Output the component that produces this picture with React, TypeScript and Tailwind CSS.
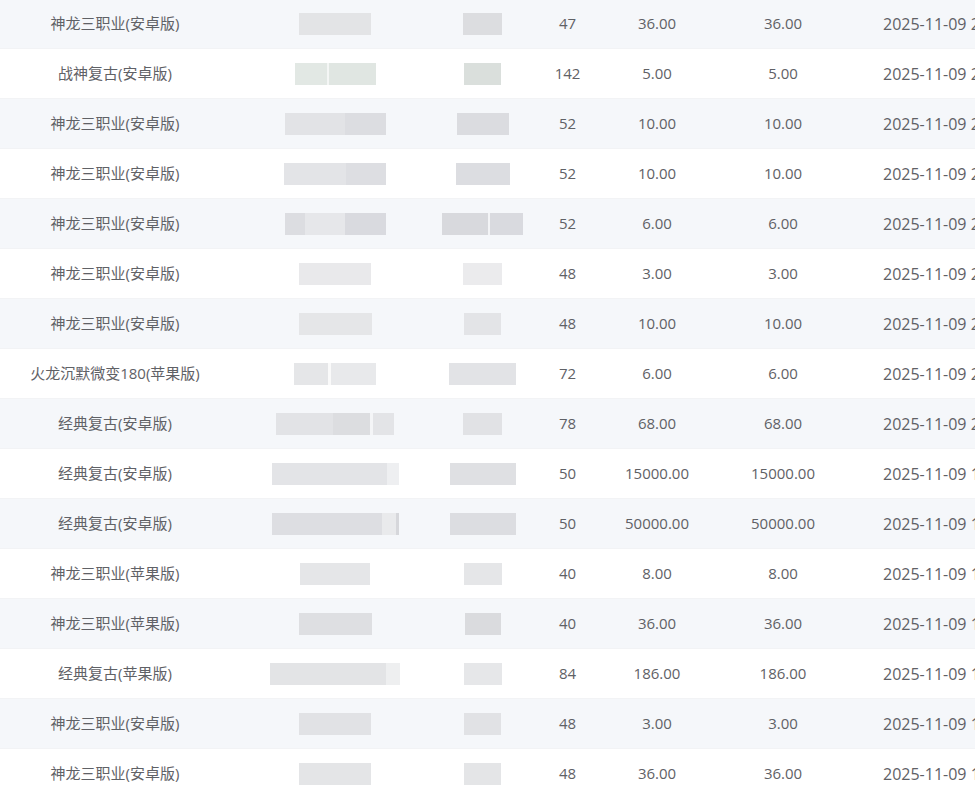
import React from 'react';

type Seg = [number, string];

interface Row {
  name: string;
  a: Seg[];
  b: Seg[];
  level: number;
  price: string;
  time: string;
}

const rows: Row[] = [
  { name: '神龙三职业(安卓版)', a: [[72, '#e3e4e6']], b: [[39, '#dcdde0']], level: 47, price: '36.00', time: '2025-11-09 21:48:12' },
  { name: '战神复古(安卓版)', a: [[32, '#e2e8e4'], [2, '#f4f6f5'], [47, '#e0e6e2']], b: [[37, '#dadfdc']], level: 142, price: '5.00', time: '2025-11-09 21:40:37' },
  { name: '神龙三职业(安卓版)', a: [[60, '#e2e3e6'], [41, '#dcdde1']], b: [[52, '#dbdce0']], level: 52, price: '10.00', time: '2025-11-09 21:33:05' },
  { name: '神龙三职业(安卓版)', a: [[62, '#e3e4e7'], [40, '#dddee2']], b: [[54, '#dcdde1']], level: 52, price: '10.00', time: '2025-11-09 21:32:48' },
  { name: '神龙三职业(安卓版)', a: [[20, '#dcdde1'], [40, '#e6e7ea'], [41, '#d9dadf']], b: [[46, '#d8d9dd'], [2, '#f3f4f6'], [33, '#d9dadf']], level: 52, price: '6.00', time: '2025-11-09 21:29:51' },
  { name: '神龙三职业(安卓版)', a: [[72, '#e9e9eb']], b: [[39, '#ebebed']], level: 48, price: '3.00', time: '2025-11-09 21:17:26' },
  { name: '神龙三职业(安卓版)', a: [[73, '#e5e6e8']], b: [[37, '#e3e4e7']], level: 48, price: '10.00', time: '2025-11-09 21:12:09' },
  { name: '火龙沉默微变180(苹果版)', a: [[34, '#e5e6e8'], [3, '#fafafa'], [45, '#e8e9eb']], b: [[67, '#e2e3e6']], level: 72, price: '6.00', time: '2025-11-09 20:58:44' },
  { name: '经典复古(安卓版)', a: [[57, '#e2e3e6'], [37, '#dcdde0'], [3, '#f4f5f7'], [21, '#e3e4e7']], b: [[39, '#e1e2e5']], level: 78, price: '68.00', time: '2025-11-09 20:41:15' },
  { name: '经典复古(安卓版)', a: [[115, '#e3e4e7'], [12, '#eeeff1']], b: [[66, '#dfe0e3']], level: 50, price: '15000.00', time: '2025-11-09 19:56:30' },
  { name: '经典复古(安卓版)', a: [[110, '#dddee2'], [14, '#e9eaec'], [3, '#d6d7db']], b: [[66, '#dcdde1']], level: 50, price: '50000.00', time: '2025-11-09 19:55:02' },
  { name: '神龙三职业(苹果版)', a: [[70, '#e5e6e8']], b: [[38, '#e5e6e8']], level: 40, price: '8.00', time: '2025-11-09 19:43:19' },
  { name: '神龙三职业(苹果版)', a: [[73, '#dedfe2']], b: [[36, '#dadbde']], level: 40, price: '36.00', time: '2025-11-09 19:37:58' },
  { name: '经典复古(苹果版)', a: [[116, '#e3e4e6'], [14, '#eeeff0']], b: [[38, '#e6e7e9']], level: 84, price: '186.00', time: '2025-11-09 19:21:40' },
  { name: '神龙三职业(安卓版)', a: [[72, '#e1e2e5']], b: [[37, '#e1e2e5']], level: 48, price: '3.00', time: '2025-11-09 19:10:27' },
  { name: '神龙三职业(安卓版)', a: [[72, '#e4e5e7']], b: [[37, '#e4e5e7']], level: 48, price: '36.00', time: '2025-11-09 19:02:11' },
];

// blurred-out cells (account / server columns)
const Masked: React.FC<{ segs: Seg[] }> = ({ segs }) => (
  <div className="flex h-[22px] blur-[0.6px]">
    {segs.map(([w, c], i) => (
      <div key={i} style={{ width: w, background: c }} />
    ))}
  </div>
);

export default function App() {
  return (
    <div
      className="w-[975px] h-[795px] overflow-hidden bg-white text-[15px] text-[#5f6166]"
      style={{ fontFamily: '"Open Sans", "Noto Sans CJK SC", sans-serif' }}
    >
      <div className="-mt-[1px]">
        {rows.map((r, i) => (
          <div
            key={i}
            className={`flex h-[50px] items-center border-b border-[#f2f3f5] whitespace-nowrap ${i % 2 === 0 ? 'bg-[#f5f7fa]' : 'bg-white'}`}
          >
            <div className="w-[230px] shrink-0 text-center">{r.name}</div>
            <div className="w-[210px] shrink-0 flex justify-center">
              <Masked segs={r.a} />
            </div>
            <div className="w-[85px] shrink-0 flex justify-center">
              <Masked segs={r.b} />
            </div>
            <div className="w-[85px] shrink-0 text-center">{r.level}</div>
            <div className="w-[94px] shrink-0 text-center">{r.price}</div>
            <div className="w-[158px] shrink-0 text-center">{r.price}</div>
            <div className="w-[200px] shrink-0 pl-[21px] text-[16px]">{r.time}</div>
          </div>
        ))}
      </div>
    </div>
  );
}
